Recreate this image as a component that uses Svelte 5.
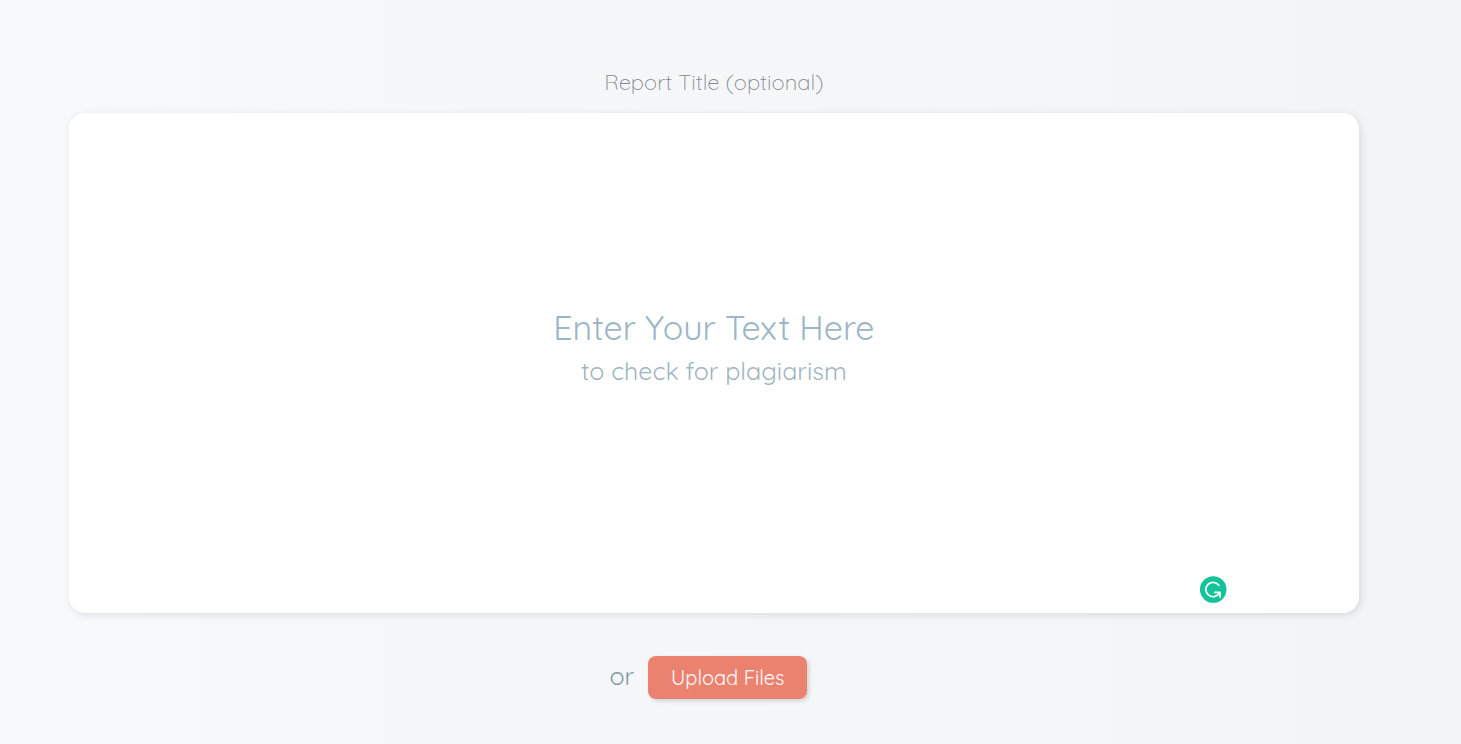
<script lang="ts">

	let title = $state('');
	let text = $state('');
	let fileInput : HTMLInputElement;

</script>

<main>
	<input class="title" type="text" aria-label="Report title" placeholder="Report Title (optional)" bind:value={title}>

	<div class="editor">
		<textarea id="report-text" bind:value={text}></textarea>
		{#if text === ''}
			<label for="report-text">
				<span class="lead">Enter Your Text Here</span>
				<span class="sub">to check for plagiarism</span>
			</label>
		{/if}
		<button class="checker" type="button" aria-label="Check grammar">
			<svg viewBox="0 0 27 27" width="27" height="27">
				<circle cx="13.2" cy="13.5" r="13.3" fill="#15c39a" />
				<path d="M18.8 9.2A7.2 7.2 0 1 0 19.2 17.3" fill="none" stroke="#fff" stroke-width="1.7" stroke-linecap="round" />
				<path d="M14.8 16.3h5.2v4.6" fill="none" stroke="#fff" stroke-width="1.7" stroke-linecap="round" stroke-linejoin="round" />
			</svg>
		</button>
	</div>

	<div class="upload">
		<span>or</span>
		<button class="upload-button" type="button" onclick={() => fileInput.click()}>Upload Files</button>
		<input type="file" aria-label="Files" multiple hidden bind:this={fileInput}>
	</div>
</main>

<style>

	:global(body) {
		min-height: 100vh;
		background: linear-gradient(to right, #f8f9fb, #f3f4f6);
	}

	main {
		display: flex;
		flex-direction: column;
		padding: 62px 7% 45px 69px;
		font-family: Quicksand, Lato, sans-serif;
	}

	input, textarea, button {
		font-family: inherit;
		border: none;
		outline: none;
	}

	.title {
		height: 40px;
		margin-bottom: 11px;
		padding: 0;
		font-size: 22px;
		font-weight: 300;
		text-align: center;
		color: #85888b;
		background: transparent;
	}

	.title::placeholder {
		color: #85888b;
		opacity: 1;
	}

	.editor {
		display: grid;
		position: relative;
		min-height: 500px;
		background: #fff;
		border-radius: 16px;
		box-shadow: 2px 2px 8px rgba(0, 0, 0, 0.11);
	}

	textarea, label {
		grid-area: 1 / 1;
	}

	textarea {
		padding: 24px;
		font-size: 20px;
		color: #5f7480;
		background: transparent;
		resize: none;
	}

	label {
		display: flex;
		flex-direction: column;
		align-items: center;
		justify-content: center;
		padding-bottom: 30px;
		font-weight: 400;
		color: #9db5c5;
		cursor: text;
	}

	.lead {
		font-size: 34px;
		line-height: 46px;
	}

	.sub {
		font-size: 25px;
		line-height: 40px;
		color: #a0b5c0;
	}

	.checker {
		position: absolute;
		right: 132px;
		bottom: 10px;
		padding: 0;
		background: transparent;
		cursor: pointer;
	}

	.checker svg {
		display: block;
	}

	.upload {
		display: flex;
		align-items: baseline;
		justify-content: center;
		gap: 14px;
		margin-top: 43px;
		padding-right: 11px;
		font-size: 25px;
		color: #8299a6;
	}

	.upload-button {
		height: 43px;
		padding: 0 23px;
		font-size: 20px;
		color: #fff;
		background: #eb8270;
		border-radius: 8px;
		box-shadow: 2px 2px 4px rgba(0, 0, 0, 0.15);
		cursor: pointer;
	}

</style>
